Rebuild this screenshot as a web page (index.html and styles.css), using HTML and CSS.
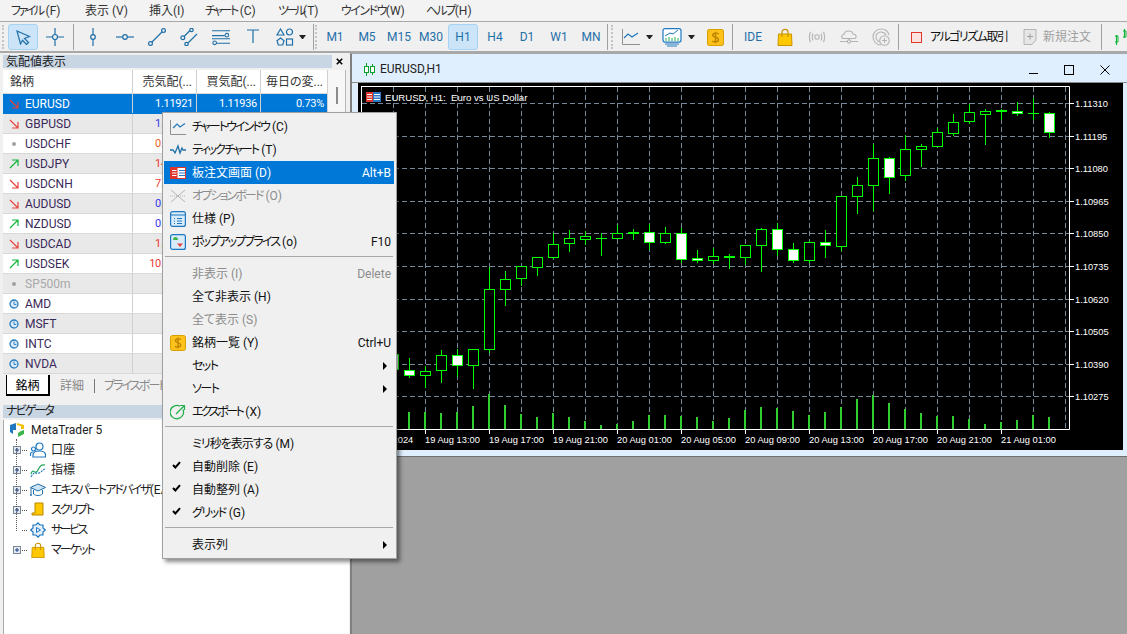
FILE: index.html
```html
<!DOCTYPE html>
<html lang="ja">
<head>
<meta charset="utf-8">
<title>MetaTrader 5</title>
<link rel="stylesheet" href="styles.css">
</head>
<body>
<svg class="sprite" aria-hidden="true">
  <symbol id="down" viewBox="0 0 10 10"><path d="M1 1L8.5 8.5M9 3V9H3" fill="none" stroke="#e8403a" stroke-width="1.2"/></symbol>
  <symbol id="up" viewBox="0 0 10 10"><path d="M1 9L8.5 1.5M3 1H9V7" fill="none" stroke="#12b53c" stroke-width="1.2"/></symbol>
  <symbol id="dot" viewBox="0 0 10 10"><circle cx="5" cy="5" r="2" fill="#a0a0a0"/></symbol>
  <symbol id="clock" viewBox="0 0 10 10"><circle cx="5" cy="5" r="4" fill="#dcebf7" stroke="#2b7fc0" stroke-width="1.3"/><path d="M5 2.5V5.4H7.4" fill="none" stroke="#2b7fc0" stroke-width="1"/></symbol>
  <symbol id="dollar" viewBox="0 0 16 16"><rect x=".5" y=".5" width="15" height="15" rx="2" fill="#ffc21a" stroke="#d79f00"/><path d="M11 4.6C10 3.6 5.4 3.4 5.4 5.8C5.4 8.2 10.8 7.4 10.8 10C10.8 12.4 6 12.4 5 11.2M8 2.5V13.5" fill="none" stroke="#bd8500" stroke-width="1.4"/></symbol>
  <symbol id="plus" viewBox="0 0 8 8"><rect x=".5" y=".5" width="7" height="7" fill="#e8ecf2" stroke="#7c8794"/><path d="M2 4H6M4 2V6" stroke="#1c3f8c"/></symbol>
  <symbol id="bag" viewBox="0 0 16 18"><path d="M1.5 6H14.5L15 17.5H1Z" fill="#ffc800" stroke="#c99300"/><path d="M5 9V4C5 .5 11 .5 11 4V9" fill="none" stroke="#c99300" stroke-width="1.2"/></symbol>
  <symbol id="check" viewBox="0 0 9 8"><path d="M1 4L3.4 6.5L8 1.2" fill="none" stroke="#000" stroke-width="2"/></symbol>
</svg>

<nav class="menubar">
  <span class="mi mi-f"><span class="kn-c">ファイル</span> (F)</span>
  <span class="mi mi-v">表示 (V)</span>
  <span class="mi mi-i">挿入(I)</span>
  <span class="mi mi-c"><span class="kn-c">チャート</span> (C)</span>
  <span class="mi mi-t"><span class="kn-d">ツール</span>(T)</span>
  <span class="mi mi-w"><span class="kn-a">ウインドウ</span>(W)</span>
  <span class="mi mi-h"><span class="kn-b">ヘルプ</span>(H)</span>
</nav>

<div class="toolbar">
  <i class="grip"></i>
  <span class="tb tb-on"><svg class="ic" viewBox="0 0 16 16"><path d="M2 2L14.5 7.5L9.5 9.5L13.5 13.5L11.5 15.5L7.5 11.3L5.5 15Z" fill="none" stroke="#1f6fa8" stroke-width="1.2"/></svg></span>
  <span class="tb"><svg class="ic ic-l" viewBox="0 0 18 18"><path d="M0 9H18M9 0V18" stroke="#1f6fa8" stroke-width="1.2"/><circle cx="9" cy="9" r="2.5" fill="#f0f0f0" stroke="#1f6fa8" stroke-width="1.2"/></svg></span>
  <i class="sep sep-a"></i>
  <span class="tb"><svg class="ic ic-l" viewBox="0 0 18 18"><path d="M9 0V18" stroke="#1f6fa8" stroke-width="1.2"/><circle cx="9" cy="9" r="2.3" fill="#f0f0f0" stroke="#1f6fa8" stroke-width="1.2"/></svg></span>
  <span class="tb"><svg class="ic ic-l" viewBox="0 0 18 18"><path d="M0 9H18" stroke="#1f6fa8" stroke-width="1.2"/><circle cx="9" cy="9" r="2.3" fill="#f0f0f0" stroke="#1f6fa8" stroke-width="1.2"/></svg></span>
  <span class="tb"><svg class="ic ic-l" viewBox="0 0 18 18"><path d="M3.5 14.5L14.5 3.5" stroke="#1f6fa8" stroke-width="1.2"/><circle cx="2.5" cy="15.5" r="1.9" fill="#f0f0f0" stroke="#1f6fa8" stroke-width="1.2"/><circle cx="15.5" cy="2.5" r="1.9" fill="#f0f0f0" stroke="#1f6fa8" stroke-width="1.2"/></svg></span>
  <span class="tb"><svg class="ic ic-l" viewBox="0 0 18 18"><path d="M4 8.5L10 2.5M8 15L17 6" stroke="#1f6fa8" stroke-width="1.2"/><g fill="#f0f0f0" stroke="#1f6fa8" stroke-width="1.2"><circle cx="2.8" cy="9.8" r="1.9"/><circle cx="11.5" cy="2" r="1.7"/><circle cx="6.5" cy="16" r="1.7"/></g></svg></span>
  <span class="tb"><svg class="ic ic-l" viewBox="0 0 20 18"><path d="M0 2H20M0 7.5H14M0 11H20M4 16H20" stroke="#1f6fa8" stroke-width="1.2" fill="none"/><g fill="#f0f0f0" stroke="#1f6fa8" stroke-width="1.2"><circle cx="16.5" cy="7" r="2"/><circle cx="3" cy="15.5" r="2"/></g></svg></span>
  <span class="tb"><svg class="ic ic-l" viewBox="0 0 18 18"><path d="M3 2H15M9 2V15" stroke="#1f6fa8" stroke-width="1.2" fill="none"/></svg></span>
  <span class="tb tb-shape"><svg class="ic ic-l" viewBox="0 0 18 18"><g fill="none" stroke="#1f6fa8" stroke-width="1.2"><path d="M4.5 1L8 7H1Z"/><circle cx="13.5" cy="4" r="3"/><path d="M4.5 10L8 12.7L6.7 17H2.3L1 12.7Z"/><rect x="10.5" y="11" width="6" height="6"/></g></svg></span>
  <i class="caret caret-a"></i>
  <i class="sep sep-b"></i>
  <i class="grip grip-b"></i>
  <span class="tb tx">M1</span>
  <span class="tb tx">M5</span>
  <span class="tb tx">M15</span>
  <span class="tb tx">M30</span>
  <span class="tb tx tb-on">H1</span>
  <span class="tb tx">H4</span>
  <span class="tb tx">D1</span>
  <span class="tb tx">W1</span>
  <span class="tb tx">MN</span>
  <i class="sep sep-c"></i>
  <i class="grip grip-c"></i>
  <svg class="ic18 ic-line" viewBox="0 0 18 16"><path d="M.5 0V15.5H18" fill="none" stroke="#909090"/><path d="M2 9L6 5L10 8L16 4" fill="none" stroke="#1f78c0" stroke-width="1.2"/></svg>
  <i class="caret caret-b"></i>
  <svg class="ic20 ic-volume" viewBox="0 0 20 19"><rect x="1" y=".6" width="18" height="13.5" rx="2" fill="#fff" stroke="#1f78c0" stroke-width="1.2"/><path d="M3 8L8 5L11 6L16 2" fill="none" stroke="#1f78c0"/><path d="M4 13V10M7 13V9M10 13V10M13 13V9M16 13V10" stroke="#22b14c"/><path d="M3 16H17M5 18H15" stroke="#1f78c0" stroke-width="1.2"/></svg>
  <i class="caret caret-c"></i>
  <span class="coin"><svg class="ic-coin" viewBox="0 0 16 16"><use href="#dollar"/></svg></span>
  <i class="sep sep-d"></i>
  <span class="ide">IDE</span>
  <svg class="ic-bag" viewBox="0 0 16 18"><use href="#bag"/></svg>
  <svg class="ic18 ic-sig" viewBox="0 0 18 12"><g fill="none" stroke="#b4b4b4" stroke-width="1.1"><circle cx="9" cy="6" r="2.2"/><path d="M5 2.5Q3.5 6 5 9.5M13 2.5Q14.5 6 13 9.5M2.5 .8Q.3 6 2.5 11.2M15.5 .8Q17.7 6 15.5 11.2"/></g></svg>
  <svg class="ic18 ic-cloud" viewBox="0 0 18 16"><g fill="none" stroke="#b4b4b4" stroke-width="1.1"><path d="M4 9.5C1 9.5 1 5.5 4 5.5C5 1 12 1 13 5C17 5 17 9.5 14 9.5Z"/><path d="M0 12.5H7M11 12.5H18M9 9.5V11"/><circle cx="9" cy="12.5" r="1.6"/></g></svg>
  <svg class="ic18 ic-net" viewBox="0 0 18 18"><g fill="none" stroke="#b4b4b4" stroke-width="1.1"><path d="M9 1A8 8 0 1 0 9 17M9 4A5 5 0 1 0 9 14M9 1C13 1 16 3 17 7M9 4C11 4 13 5 14 7"/><circle cx="12.5" cy="12.5" r="4.8" fill="#f0f0f0"/><path d="M12.5 10V15M10 12.5H15"/></g></svg>
  <i class="sep sep-e"></i>
  <span class="algo"><i class="algo-box"></i><span class="kn-a">アルゴリズム取引</span></span>
  <span class="order"><svg class="ic-doc" viewBox="0 0 14 16"><path d="M1 .5H13V11L9 15.5H1Z" fill="#e6e6e6" stroke="#b4b4b4"/><path d="M7 4.5V10.5M4 7.5H10" stroke="#a0a0a0"/></svg>新規注文</span>
  <i class="sep sep-f"></i>
  <svg class="ic-candle" viewBox="0 0 13 16"><path d="M2.5 6V16M10.5 0V9" stroke="#12b53c" stroke-width="1.2"/><path d="M1 7H4V13H1M9 2H12V8H9" fill="none" stroke="#12b53c"/></svg>
</div>

<main class="workspace">
  <aside class="left">
    <header class="ptitle"><span>気配値表示</span><svg class="pclose" viewBox="0 0 7 7"><path d="M.8 .8L6.2 6.2M6.2 .8L.8 6.2" stroke="#000" stroke-width="1.6"/></svg></header>
    <section class="mw">
      <div class="mw-table">
        <div class="row head"><span class="c name">銘柄</span><span class="c num">売気配(...</span><span class="c num">買気配(...</span><span class="c num">毎日の変...</span></div>
        <div class="row sel"><span class="c name"><svg class="ri"><use href="#down"/></svg>EURUSD</span><span class="c num">1.11921</span><span class="c num">1.11936</span><span class="c num">0.73%</span></div>
        <div class="row alt"><span class="c name"><svg class="ri"><use href="#down"/></svg>GBPUSD</span><span class="c num blue">1.30412</span><span class="c num"></span><span class="c num"></span></div>
        <div class="row"><span class="c name"><svg class="ri"><use href="#dot"/></svg>USDCHF</span><span class="c num orange">0.85612</span><span class="c num"></span><span class="c num"></span></div>
        <div class="row alt"><span class="c name"><svg class="ri"><use href="#up"/></svg>USDJPY</span><span class="c num red">145.312</span><span class="c num"></span><span class="c num"></span></div>
        <div class="row"><span class="c name"><svg class="ri"><use href="#down"/></svg>USDCNH</span><span class="c num red">7.13204</span><span class="c num"></span><span class="c num"></span></div>
        <div class="row alt"><span class="c name"><svg class="ri"><use href="#down"/></svg>AUDUSD</span><span class="c num blue">0.67412</span><span class="c num"></span><span class="c num"></span></div>
        <div class="row"><span class="c name"><svg class="ri"><use href="#up"/></svg>NZDUSD</span><span class="c num blue">0.61308</span><span class="c num"></span><span class="c num"></span></div>
        <div class="row alt"><span class="c name"><svg class="ri"><use href="#down"/></svg>USDCAD</span><span class="c num red">1.36120</span><span class="c num"></span><span class="c num"></span></div>
        <div class="row"><span class="c name"><svg class="ri"><use href="#up"/></svg>USDSEK</span><span class="c num red">10.17230</span><span class="c num"></span><span class="c num"></span></div>
        <div class="row alt off"><span class="c name"><svg class="ri"><use href="#dot"/></svg>SP500m</span><span class="c num faint">5608.0</span><span class="c num"></span><span class="c num"></span></div>
        <div class="row"><span class="c name"><svg class="ri"><use href="#clock"/></svg>AMD</span><span class="c num"></span><span class="c num"></span><span class="c num"></span></div>
        <div class="row alt"><span class="c name"><svg class="ri"><use href="#clock"/></svg>MSFT</span><span class="c num"></span><span class="c num"></span><span class="c num"></span></div>
        <div class="row"><span class="c name"><svg class="ri"><use href="#clock"/></svg>INTC</span><span class="c num"></span><span class="c num"></span><span class="c num"></span></div>
        <div class="row alt"><span class="c name"><svg class="ri"><use href="#clock"/></svg>NVDA</span><span class="c num"></span><span class="c num"></span><span class="c num"></span></div>
      </div>
      <div class="mw-scroll"><i class="thumb"></i></div>
    </section>
    <div class="tabs">
      <span class="tab tab-on">銘柄</span>
      <span class="tab tab-d">詳細</span>
      <i class="tab-sep"></i>
      <span class="tab tab-p kn-b">プライスボード</span>
    </div>
    <header class="ptitle ptitle-nav"><span class="kn-b">ナビゲータ</span></header>
    <section class="tree">
      <i class="tree-v"></i>
      <div class="node root"><svg class="ni" viewBox="0 0 16 16"><path d="M1 3L7 1V8H4V12L1 10Z" fill="#1f78c0"/><path d="M8 1L15 3V7H12V4L8 3Z" fill="#f2c200"/><path d="M15 8V12L9 15V11L12 9Z" fill="#3cb54a"/></svg>MetaTrader 5</div>
      <div class="node"><svg class="ex"><use href="#plus"/></svg><i class="dash"></i><svg class="ni" viewBox="0 0 16 16"><g fill="none" stroke="#1f78c0" stroke-width="1.2"><circle cx="9.5" cy="4.5" r="3.5"/><path d="M3 15V13C3 10 6 9 9.5 9S15.5 10 15.5 13V15Z"/><circle cx="3.5" cy="7" r="2"/><path d="M.5 14V12C.5 11 1.5 10 3 10"/></g></svg>口座</div>
      <div class="node"><svg class="ex"><use href="#plus"/></svg><i class="dash"></i><svg class="ni" viewBox="0 0 16 16"><path d="M1 12C3 5 5 14 8 8S12 3 15 3" fill="none" stroke="#22a559" stroke-width="1.2"/><path d="M1 15C4 9 6 12 9 11S13 7 15 7" fill="none" stroke="#1f78c0" stroke-width="1.2" stroke-dasharray="2 1"/></svg>指標</div>
      <div class="node"><svg class="ex"><use href="#plus"/></svg><i class="dash"></i><svg class="ni" viewBox="0 0 16 16"><path d="M8 2L15.5 5.5L8 9L.5 5.5Z" fill="#cfe4f5" stroke="#1f6fa8"/><path d="M3.5 8V12C6 14 10 14 12.5 12V8" fill="none" stroke="#1f6fa8"/><path d="M1 6V12" stroke="#1f6fa8"/><circle cx="1" cy="13" r="1" fill="#1f6fa8"/></svg><span class="kn-b">エキスパートアドバイザ</span>(EA)</div>
      <div class="node"><svg class="ex"><use href="#plus"/></svg><i class="dash"></i><svg class="ni" viewBox="0 0 16 16"><path d="M5 1H13V13H11H2V11H5Z" fill="#ffc800" stroke="#b98600"/></svg><span class="kn-b">スクリプト</span></div>
      <div class="node"><i class="ex-blank"></i><i class="dash"></i><svg class="ni" viewBox="0 0 16 16"><path d="M8 .8L10 3H13V6L15.3 8L13 10V13H10L8 15.2L6 13H3V10L.7 8L3 6V3H6Z" fill="#e4f0fa" stroke="#1f78c0" stroke-width="1.2"/><path d="M6.5 5.5L10.5 8L6.5 10.5Z" fill="none" stroke="#1f78c0"/></svg><span class="kn-c">サービス</span></div>
      <div class="node"><svg class="ex"><use href="#plus"/></svg><i class="dash"></i><svg class="ni" viewBox="0 0 16 18"><use href="#bag"/></svg><span class="kn-b">マーケット</span></div>
    </section>
  </aside>

  <section class="mdi">
    <article class="chartwin">
      <header class="chart-title">
        <svg class="chart-ic" viewBox="0 0 11 13"><path d="M2.5 0V13M8.5 1V12" stroke="#0ca02c"/><rect x=".5" y="3.5" width="4" height="6" fill="#fff" stroke="#0ca02c"/><rect x="6.5" y="3.5" width="4" height="6" fill="#fff" stroke="#0ca02c"/></svg>
        <span class="chart-name">EURUSD,H1</span>
        <span class="wbtns">
          <svg class="wb wb-min" viewBox="0 0 9 9"><path d="M0 8.5H9" stroke="#000"/></svg>
          <svg class="wb wb-max" viewBox="0 0 10 10"><rect x=".5" y=".5" width="9" height="9" fill="none" stroke="#000"/></svg>
          <svg class="wb wb-x" viewBox="0 0 10 10"><path d="M.5 .5L9.5 9.5M9.5 .5L.5 9.5" stroke="#000"/></svg>
        </span>
      </header>
      <div class="chart-body">
        <svg class="chart" viewBox="358 84 765 367" width="765" height="367">
          <path class="grid" d="M393.5 88V430M425.5 88V430M457.5 88V430M489.5 88V430M521.5 88V430M553.5 88V430M585.5 88V430M617.5 88V430M649.5 88V430M681.5 88V430M713.5 88V430M745.5 88V430M777.5 88V430M809.5 88V430M841.5 88V430M873.5 88V430M905.5 88V430M937.5 88V430M969.5 88V430M1001.5 88V430M1033.5 88V430M1065.5 88V430"/>
          <path class="grid" d="M362 104.5H1069M362 137.5H1069M362 169.5H1069M362 202.5H1069M362 234.5H1069M362 267.5H1069M362 300.5H1069M362 332.5H1069M362 365.5H1069M362 397.5H1069"/>
          <path class="vol" d="M409 413V430M425 413V430M441 414V430M457 413V430M473 407V430M489 395V430M505 406V430M521 415V430M537 418V430M553 414V430M569 418V430M585 422V430M601 426V430M617 425V430M633 422V430M649 416V430M665 416V430M681 417V430M697 418V430M713 422V430M729 419V430M745 411V430M761 408V430M777 409V430M793 412V430M809 416V430M825 413V430M841 408V430M857 400V430M873 396V430M889 404V430M905 410V430M921 414V430M937 417V430M953 417V430M969 420V430M985 425V430M1001 423V430M1017 421V430M1033 416V430M1049 418V430"/>
          <path class="frame" d="M361.5 87V430.5H1069.5V87.5H361.5M1069.5 104.5H1074M1069.5 137.5H1074M1069.5 169.5H1074M1069.5 202.5H1074M1069.5 234.5H1074M1069.5 267.5H1074M1069.5 300.5H1074M1069.5 332.5H1074M1069.5 365.5H1074M1069.5 397.5H1074M425.5 430V435M489.5 430V435M553.5 430V435M617.5 430V435M681.5 430V435M745.5 430V435M809.5 430V435M873.5 430V435M937.5 430V435M1001.5 430V435"/>
          <path class="wick" d="M409.5 359V379M425.5 367V389M441.5 351V384M457.5 350V378M473.5 350V390M489.5 268V354M505.5 272V307M521.5 267V287M537.5 258V277M553.5 234V260M569.5 231V253M585.5 232V246M601.5 234V257M617.5 226V239M633.5 230V241M649.5 225V251M665.5 228V245M681.5 229V264M697.5 251V264M713.5 249V265M729.5 255V270M745.5 246V266M761.5 229V273M777.5 224V257M793.5 244V264M809.5 242V264M825.5 231V259M841.5 197V252M857.5 178V215M873.5 145V212M889.5 158V195M905.5 136V182M921.5 145V168M937.5 129V148M953.5 115V137M969.5 105V125M985.5 110V146M1001.5 110V121M1017.5 103V117M1033.5 99V121M1049.5 113V139"/>
          <path class="wick" d="M596 239.5H607M628 233.5H639M628 234.5H639M724 257.5H735M724 258.5H735M996 111.5H1007M996 112.5H1007M1028 114.5H1039"/>
          <g class="cw">
            <rect x="388.5" y="355.5" width="10" height="15"/>
            <rect x="404.5" y="371.5" width="10" height="5"/>
            <rect x="452.5" y="356.5" width="10" height="10"/>
            <rect x="644.5" y="233.5" width="10" height="10"/>
            <rect x="676.5" y="234.5" width="10" height="26"/>
            <rect x="692.5" y="259.5" width="10" height="2"/>
            <rect x="772.5" y="230.5" width="10" height="20"/>
            <rect x="788.5" y="250.5" width="10" height="11"/>
            <rect x="820.5" y="243.5" width="10" height="3"/>
            <rect x="884.5" y="159.5" width="10" height="19"/>
            <rect x="1012.5" y="112.5" width="10" height="2"/>
            <rect x="1044.5" y="114.5" width="10" height="19"/>
          </g>
          <g class="cb">
            <rect x="420.5" y="372.5" width="10" height="4"/>
            <rect x="436.5" y="356.5" width="10" height="15"/>
            <rect x="468.5" y="350.5" width="10" height="16"/>
            <rect x="484.5" y="290.5" width="10" height="60"/>
            <rect x="500.5" y="280.5" width="10" height="10"/>
            <rect x="516.5" y="267.5" width="10" height="12"/>
            <rect x="532.5" y="258.5" width="10" height="10"/>
            <rect x="548.5" y="245.5" width="10" height="13"/>
            <rect x="564.5" y="239.5" width="10" height="5"/>
            <rect x="580.5" y="237.5" width="10" height="3"/>
            <rect x="612.5" y="234.5" width="10" height="5"/>
            <rect x="660.5" y="234.5" width="10" height="9"/>
            <rect x="708.5" y="257.5" width="10" height="4"/>
            <rect x="740.5" y="246.5" width="10" height="12"/>
            <rect x="756.5" y="230.5" width="10" height="16"/>
            <rect x="804.5" y="243.5" width="10" height="18"/>
            <rect x="836.5" y="197.5" width="10" height="50"/>
            <rect x="852.5" y="186.5" width="10" height="11"/>
            <rect x="868.5" y="159.5" width="10" height="27"/>
            <rect x="900.5" y="150.5" width="10" height="26"/>
            <rect x="916.5" y="147.5" width="10" height="3"/>
            <rect x="932.5" y="133.5" width="10" height="14"/>
            <rect x="948.5" y="123.5" width="10" height="11"/>
            <rect x="964.5" y="113.5" width="10" height="9"/>
            <rect x="980.5" y="112.5" width="10" height="3"/>
          </g>
          <g class="flag"><rect x="366" y="93" width="7" height="10" fill="#e0352b"/><rect x="373" y="93" width="8" height="10" fill="#2a78c4"/><path d="M367 95.5H372M367 98H372M367 100.5H372M374 95.5H380M374 98H380M374 100.5H380" stroke="#fff"/></g>
          <text class="lbl lbl-t" x="385" y="102">EURUSD, H1:&#160; Euro vs US Dollar</text>
          <g class="lbl">
            <text x="1075" y="108">1.11310</text><text x="1075" y="141">1.11195</text><text x="1075" y="173">1.11080</text><text x="1075" y="206">1.10965</text><text x="1075" y="238">1.10850</text><text x="1075" y="271">1.10735</text><text x="1075" y="304">1.10620</text><text x="1075" y="336">1.10505</text><text x="1075" y="369">1.10390</text><text x="1075" y="401">1.10275</text>
            <text x="361" y="444">19 Aug 2024</text><text x="425" y="444">19 Aug 13:00</text><text x="489" y="444">19 Aug 17:00</text><text x="553" y="444">19 Aug 21:00</text><text x="617" y="444">20 Aug 01:00</text><text x="681" y="444">20 Aug 05:00</text><text x="745" y="444">20 Aug 09:00</text><text x="809" y="444">20 Aug 13:00</text><text x="873" y="444">20 Aug 17:00</text><text x="937" y="444">20 Aug 21:00</text><text x="1001" y="444">21 Aug 01:00</text>
          </g>
        </svg>
      </div>
    </article>
  </section>
</main>

<div class="ctx">
  <div class="it"><svg class="mic" viewBox="0 0 16 16"><path d="M.5 1V15.5H16" fill="none" stroke="#909090"/><path d="M3 9L7 5L10 8L15 4.5" fill="none" stroke="#1f78c0" stroke-width="1.2"/></svg><span class="lb"><span class="kn-b">チャートウインドウ</span> (C)</span></div>
  <div class="it"><svg class="mic" viewBox="0 0 16 16"><path d="M0 8H3L5 11L8 4L10 11L12 6L13 8H16" fill="none" stroke="#1f6fa8" stroke-width="1.3"/></svg><span class="lb"><span class="kn-b">ティックチャート</span> (T)</span></div>
  <div class="it it-hi"><svg class="mic" viewBox="0 0 16 12"><rect x=".5" y=".5" width="15" height="11" fill="#fff" stroke="#e0352b"/><rect x="1" y="1" width="6.5" height="10" fill="#e0352b"/><path d="M2 3.5H6.5M2 6H6.5M2 8.5H6.5M8.5 1V11" stroke="#fff"/><path d="M9 3.5H15M9 6H15M9 8.5H15" stroke="#2a78c4"/></svg><span class="lb">板注文画面 (D)</span><span class="sc">Alt+B</span></div>
  <div class="it it-off"><svg class="mic" viewBox="0 0 16 16"><path d="M1 2L15 14M15 2L1 14" stroke="#b4b4b4"/><path d="M0 8H16" stroke="#b4b4b4" stroke-dasharray="1 1"/></svg><span class="lb"><span class="kn-b">オプションボード</span> (O)</span></div>
  <div class="it"><svg class="mic" viewBox="0 0 16 16"><rect x=".6" y=".6" width="14.8" height="14.8" rx="2" fill="#d7ebf9" stroke="#1f78c0" stroke-width="1.2"/><path d="M1 4H15M4 7.5H5M7 7.5H12M4 10H5M7 10H12M4 12.5H5M7 12.5H12" stroke="#1f78c0"/></svg><span class="lb">仕様 (P)</span></div>
  <div class="it"><svg class="mic" viewBox="0 0 16 16"><rect x=".6" y=".6" width="14.8" height="14.8" rx="2" fill="#d7ebf9" stroke="#1f78c0" stroke-width="1.2"/><path d="M3 6C3 2 8 2 8 6Z" fill="#3cb54a"/><path d="M7 9.5H13L10 13Z" fill="#e8403a"/></svg><span class="lb"><span class="kn-b">ポップアッププライス</span> (o)</span><span class="sc">F10</span></div>
  <div class="msep"></div>
  <div class="it it-off"><span class="lb">非表示 (I)</span><span class="sc">Delete</span></div>
  <div class="it"><span class="lb">全て非表示 (H)</span></div>
  <div class="it it-off"><span class="lb">全て表示 (S)</span></div>
  <div class="it"><svg class="mic" viewBox="0 0 16 16"><use href="#dollar"/></svg><span class="lb">銘柄一覧 (Y)</span><span class="sc">Ctrl+U</span></div>
  <div class="it"><span class="lb kn-a">セット</span><i class="sub"></i></div>
  <div class="it"><span class="lb kn-a">ソート</span><i class="sub"></i></div>
  <div class="it"><svg class="mic" viewBox="0 0 16 16"><path d="M13 5.5A6.7 6.7 0 1 1 10 2.2" fill="none" stroke="#22b14c" stroke-width="1.3"/><path d="M6 10L14 2M10 1.5H14.5V6" fill="none" stroke="#22b14c" stroke-width="1.2"/></svg><span class="lb"><span class="kn-c">エクスポート</span> (X)</span></div>
  <div class="msep"></div>
  <div class="it"><span class="lb"><span class="kn-e">ミリ秒を表示する</span> (M)</span></div>
  <div class="it"><svg class="chk" viewBox="0 0 9 8"><use href="#check"/></svg><span class="lb">自動削除 (E)</span></div>
  <div class="it"><svg class="chk" viewBox="0 0 9 8"><use href="#check"/></svg><span class="lb">自動整列 (A)</span></div>
  <div class="it"><svg class="chk" viewBox="0 0 9 8"><use href="#check"/></svg><span class="lb"><span class="kn-a">グリッド</span> (G)</span></div>
  <div class="msep"></div>
  <div class="it"><span class="lb">表示列</span><i class="sub"></i></div>
</div>
</body>
</html>
```

FILE: styles.css
```css
* { box-sizing: border-box; }
html, body { margin: 0; padding: 0; }
body {
  width: 1127px;
  height: 634px;
  overflow: hidden;
  position: relative;
  background: #f0f0f0;
  color: #000;
  font: 12px/1 Roboto, "Noto Sans CJK JP", sans-serif;
  font-feature-settings: "palt";
}
i { display: block; font-style: normal; flex: none; }
svg { display: block; flex: none; }
.sprite { position: absolute; width: 0; height: 0; }

/* the reference's kana are narrower than Noto CJK's */
.kn-a { letter-spacing: -1.5px; }
.kn-b { letter-spacing: -1.9px; }
.kn-c { letter-spacing: -2.5px; }
.kn-d { letter-spacing: -3px; }
.kn-e { letter-spacing: -1px; }

/* menu bar */
.menubar {
  height: 22px;
  display: flex;
  align-items: center;
  background: #f3f3f3;
  color: #333;
  border-bottom: 1px solid #a8a8a8;
}
.mi { white-space: nowrap; }
.mi-f { margin-left: 11px; width: 74px; }
.mi-v { width: 64px; }
.mi-i { width: 56px; }
.mi-c { width: 73px; }
.mi-t { width: 63px; }
.mi-w { width: 85px; }

/* tool bar */
.toolbar {
  height: 31px;
  display: flex;
  align-items: center;
  background: #f0f0f0;
  border-bottom: 2px solid #a8a8a8;
  padding: 1px 0 0 2px;
}
.grip { width: 2px; height: 24px; border-left: 2px dotted #c4c4c4; }
.grip-b { margin: 0 2px 0 1px; }
.grip-c { margin: 0 9px 0 3px; }
.tb {
  width: 32px;
  height: 26px;
  flex: none;
  display: flex;
  align-items: center;
  justify-content: center;
}
.tb-on {
  background: #cce4f7;
  border: 1px solid #a6d2f3;
  border-radius: 3px;
  width: 30px;
  margin: 0 1px;
}
.toolbar > .tb-on:first-of-type { margin: 0 1px 0 4px; }
.tx { color: #1f6fa8; }
.ic { width: 16px; height: 16px; }
.ic-l { width: 18px; height: 18px; }
.sep { width: 1px; height: 26px; background: #a0a0a0; }
.sep-a { margin: 0 3px 0 2px; }
.sep-b { margin: 0 0 0 1px; }
.sep-c { margin-left: 0; }
.sep-d { margin: 0 11px 0 8px; }
.sep-e { margin: 0 12px 0 8px; }
.sep-f { margin: 0 12px 0 10px; }
.caret { height: 0; width: 7px; border: 3.5px solid transparent; border-top: 4px solid #222; border-bottom: 0; }
.caret-a { margin-left: -2px; margin-right: 6px; }
.caret-b { margin: 0 9px 0 6px; }
.caret-c { margin: 0 12px 0 6px; }
.ic18 { width: 18px; height: 16px; }
.ic20 { width: 20px; height: 19px; }
.coin { display: block; flex: none; }
.ic-coin { width: 17px; height: 17px; }
.ide { color: #1f6fa8; width: 18px; margin-right: 15px; }
.ic-bag { width: 16px; height: 18px; margin-right: 15px; }
.ic-sig { margin-right: 14px; height: 12px; }
.ic-cloud { margin-right: 14px; }
.ic-net { height: 18px; }
.algo { display: flex; align-items: center; color: #111; width: 95px; flex: none; white-space: nowrap; }
.algo-box { width: 11px; height: 11px; margin-right: 8px; background: #fde3e0; border: 1px solid #e0352b; }
.order { display: flex; align-items: center; color: #a0a0a0; margin-left: 17px; white-space: nowrap; flex: none; }
.ic-doc { width: 14px; height: 16px; margin-right: 6px; }
.ic-candle { width: 13px; height: 16px; }

/* workspace */
.workspace { display: flex; height: 581px; }
.left {
  width: 350px;
  flex: none;
  padding: 2px 0 0 3px;
  background: #f0f0f0;
  display: flex;
  flex-direction: column;
}
.ptitle {
  width: 343px;
  height: 13px;
  display: flex;
  align-items: center;
  justify-content: space-between;
  background: #c8d6e4;
  margin-right: 4px;
  padding-left: 3px;
  color: #222;
  box-shadow: inset -14px 0 0 #f0f0f0;
}
.pclose { width: 7px; height: 7px; margin-right: 3px; }

.mw { display: flex; margin-top: 2px; height: 304px; }
.mw-table { width: 325px; flex: none; }
.mw-scroll { width: 18px; flex: none; background: #f7f7f7; border-right: 1px solid #b8b8b8; padding: 17px 0 0 8px; }
.thumb { width: 2px; height: 17px; background: #8c8c8c; }
.row {
  display: grid;
  grid-template-columns: 130px 64px 64px 67px;
  height: 20px;
  background: #fff;
  border-bottom: 1px solid #d8d8d8;
  color: #3a2a5a;
}
.row.head { height: 24px; color: #333; }
.row.alt { background: #e9e9e9; }
.row.sel { background: #0078d7; color: #fff; border-bottom-color: #0078d7; }
.row.off { color: #a8a8a8; }
.c {
  display: flex;
  align-items: center;
  border-right: 1px solid #d0d0d0;
  white-space: nowrap;
  overflow: hidden;
}
.name { padding-left: 6px; }
.row.head .name { padding-left: 7px; }
.num { justify-content: flex-end; padding-right: 3px; font-size: 11px; letter-spacing: -.3px; }
.row.head .num { padding-right: 4px; color: #333; font-size: 12px; letter-spacing: 0; }
.ri { width: 10px; height: 10px; margin-right: 6px; }
.blue { color: #3838e8; }
.red { color: #ef3a32; }
.orange { color: #f0641e; }
.faint { color: #eecb9c; }

.tabs { height: 24px; display: flex; align-items: flex-start; color: #888; }
.tab { white-space: nowrap; flex: none; line-height: 22px; }
.tab-on {
  margin-left: 3px;
  width: 44px;
  height: 21px;
  margin-top: 1px;
  text-align: center;
  background: #fff;
  color: #000;
  border: 1px solid #000;
  border-width: 0 2px 2px 1px;
}
.tab-d { margin: 1px 0 0 10px; width: 24px; }
.tab-sep { width: 1px; height: 14px; background: #777; margin: 5px 9px 0 10px; }
.tab-p { margin-top: 1px; }

.ptitle-nav { margin-top: 7px; box-shadow: none; line-height: 11px; }
.tree {
  margin-top: 2px;
  flex: 1;
  width: 346px;
  background: #fff;
  border-left: 1px solid #a8a8a8;
  position: relative;
  color: #222;
}
.tree-v { position: absolute; left: 12px; top: 19px; height: 92px; border-left: 1px dotted #555; }
.node { height: 20px; display: flex; align-items: center; padding-left: 9px; white-space: nowrap; }
.root { padding-left: 5px; }
.ex { width: 8px; height: 8px; }
.ex-blank { width: 8px; height: 8px; }
.dash { width: 5px; margin: 0 3px 0 1px; border-top: 1px dotted #555; }
.ni { width: 16px; height: 16px; margin-right: 5px; }
.root .ni { margin-right: 6px; }

/* MDI area */
.mdi { flex: 1; background: #a0a0a0; border-left: 2px solid #808080; border-top: 1px solid #a8a8a8; }
.chartwin { background: #e0effd; border-bottom: 1px solid #707070; }
.chart-title {
  height: 29px;
  display: flex;
  align-items: center;
  padding: 2px 0 0 12px;
  color: #222;
  border-bottom: 1px solid #8c8c8c;
}
.chart-ic { width: 11px; height: 13px; margin-right: 5px; }
.wbtns { margin: 1px 0 0 auto; display: flex; align-items: center; }
.wb-min { width: 9px; height: 9px; margin-right: 26px; }
.wb-max { width: 10px; height: 10px; margin-right: 26px; }
.wb-x { width: 10px; height: 10px; margin-right: 17px; }
.chart-body { padding: 0 4px 6px 6px; }
.chart { background: #000; font-family: "Liberation Sans", sans-serif; }
.grid { fill: none; stroke: #778899; stroke-dasharray: 5 3; }
.vol { fill: none; stroke: #32cd32; stroke-width: 2; }
.frame { fill: none; stroke: #fff; }
.wick { fill: none; stroke: #00ff00; }
.cw rect { fill: #fff; stroke: #00ff00; }
.cb rect { fill: #000; stroke: #00ff00; }
.lbl { fill: #fff; font-size: 9.3px; }
.lbl-t { font-size: 9.6px; }

/* context menu */
.ctx {
  position: absolute;
  left: 162px;
  top: 112px;
  width: 235px;
  height: 447px;
  padding: 2px 2px 3px 1px;
  background: #f0f0f0;
  border: 1px solid #a0a0a0;
  box-shadow: 3px 3px 4px rgba(0, 0, 0, .45);
  color: #111;
}
.it { height: 23px; display: flex; align-items: center; padding: 0 3px 0 28px; position: relative; white-space: nowrap; }
.it-hi { background: #0078d7; color: #fff; }
.it-off { color: #8c8c8c; }
.sc { margin-left: auto; }
.mic { position: absolute; left: 6px; top: 3.5px; width: 16px; height: 16px; }
.it-hi .mic { height: 12px; top: 5.5px; }
.chk { position: absolute; left: 8px; top: 6px; width: 9px; height: 8px; }
.sub { margin-left: auto; margin-right: 4px; width: 0; height: 0; border: 4px solid transparent; border-left: 4px solid #000; border-right: 0; }
.msep { height: 9px; padding-top: 3px; margin: 0 1px; }
.msep::before { content: ""; display: block; height: 1px; background: #a8a8a8; }
```
